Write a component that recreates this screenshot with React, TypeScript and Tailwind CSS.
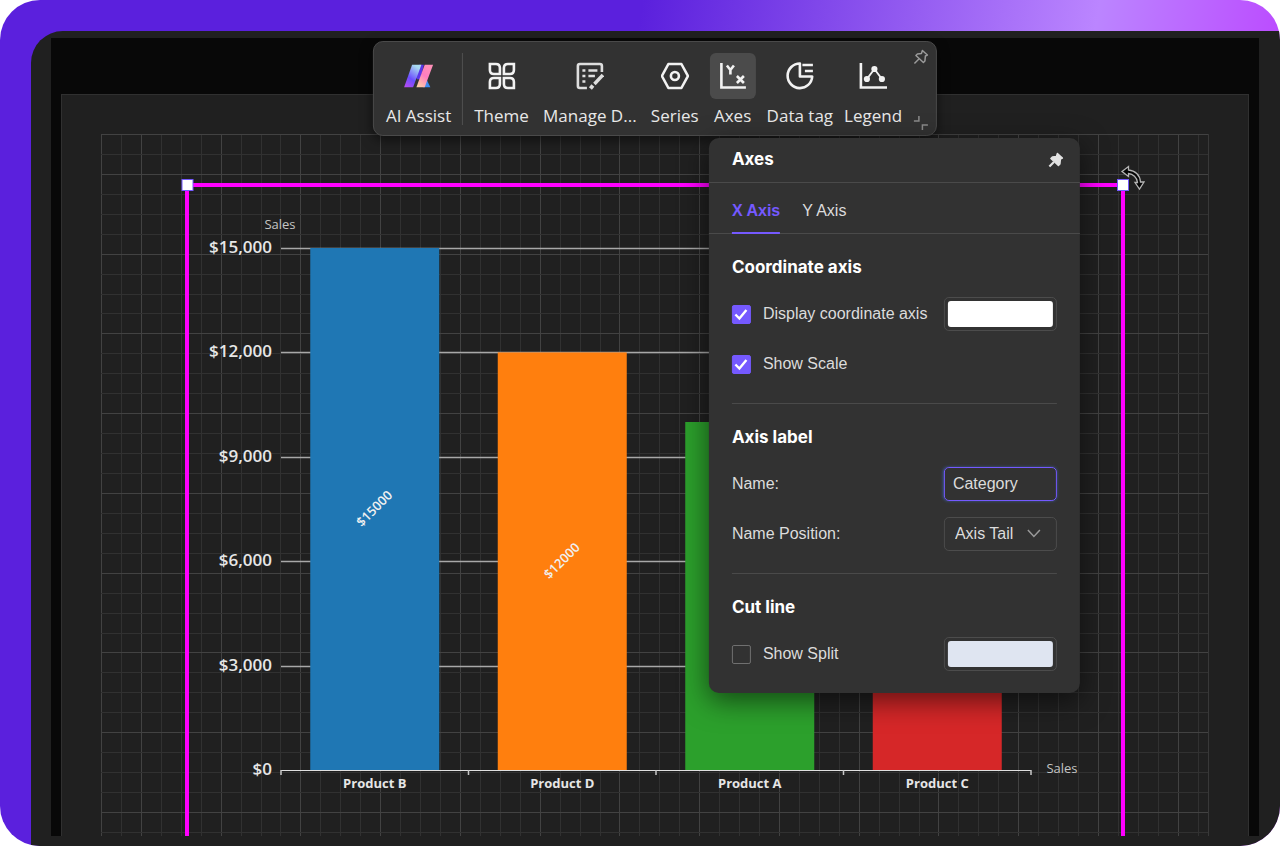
import { useState } from 'react';
import type { ReactNode } from 'react';

const PLOT = { left: 180, right: 930, base: 636, height: 522, max: 15000 };
const SLOT = (PLOT.right - PLOT.left) / 4;
const BAR_W = 129;
const GRID = 19.94;

const products = [
  { name: 'Product B', value: 15000, color: '#1f77b4' },
  { name: 'Product D', value: 12000, color: '#ff7f0e' },
  { name: 'Product A', value: 10000, color: '#2ca02c' },
  { name: 'Product C', value: 8000, color: '#d62728' },
];

const scale = [0, 3000, 6000, 9000, 12000, 15000];

const yOf = (value: number) => PLOT.base - (value / PLOT.max) * PLOT.height;

function GridLines() {
  const cols = Array.from({ length: 56 }, (_, i) => i);
  const rows = Array.from({ length: 36 }, (_, i) => i);

  return (
    <g strokeWidth={1}>
      {cols.map(i => (
        <line
          key={`c${i}`}
          x1={Math.round(i * GRID) + 0.5}
          x2={Math.round(i * GRID) + 0.5}
          y1={0}
          y2={702}
          stroke={i % 4 === 2 || i === 0 ? '#424242' : '#313131'}
        />
      ))}
      {rows.map(i => (
        <line
          key={`r${i}`}
          x1={0}
          x2={1108}
          y1={Math.round(i * GRID) + 0.5}
          y2={Math.round(i * GRID) + 0.5}
          stroke={i % 4 === 2 || i === 0 ? '#424242' : '#313131'}
        />
      ))}
      <line x1={1107.5} x2={1107.5} y1={0} y2={702} stroke="#383838" />
    </g>
  );
}

function Chart() {
  return (
    <svg
      viewBox="0 0 1108 702"
      className="block w-full h-auto font-['Open_Sans','Noto_Sans',sans-serif]"
      role="img"
      aria-label="Sales by product"
    >
      <GridLines />

      {/* Value axis */}
      {scale.map(v => (
        <g key={v}>
          <line
            x1={PLOT.left}
            x2={PLOT.right}
            y1={Math.round(yOf(v)) + 0.5}
            y2={Math.round(yOf(v)) + 0.5}
            stroke={v === 0 ? '#e0e0e0' : '#a8a8a8'}
            strokeWidth={v === 0 ? 1 : 1.5}
          />
          <text x={171} y={yOf(v) + 5} textAnchor="end" className="fill-[#e6e6e6] text-[17px] font-semibold">
            ${v.toLocaleString('en-US')}
          </text>
        </g>
      ))}
      <text x={179} y={95} textAnchor="middle" className="fill-[#c4c4c4] text-[13px]">Sales</text>
      <text x={961} y={639} textAnchor="middle" className="fill-[#c4c4c4] text-[13px]">Sales</text>

      {/* Bars */}
      {products.map((p, i) => {
        const center = PLOT.left + SLOT * (i + 0.5);
        const top = yOf(p.value);
        const middle = (top + PLOT.base) / 2;
        return (
          <g key={p.name}>
            <rect x={center - BAR_W / 2} y={top} width={BAR_W} height={PLOT.base - top} fill={p.color} />
            <text
              x={center}
              y={middle + 4}
              textAnchor="middle"
              transform={`rotate(-45 ${center} ${middle})`}
              className="fill-[#f0f0f0] text-[13px] font-semibold"
            >
              ${p.value}
            </text>
            <text x={center} y={654} textAnchor="middle" className="fill-[#e6e6e6] text-[13px] font-bold">
              {p.name}
            </text>
          </g>
        );
      })}
      {[0, 1, 2, 3, 4].map(i => (
        <line
          key={i}
          x1={PLOT.left + SLOT * i}
          x2={PLOT.left + SLOT * i}
          y1={636}
          y2={641}
          stroke="#c8c8c8"
          strokeWidth={1.5}
        />
      ))}

      {/* Selection frame */}
      <path d="M86 702V51H1022V702" fill="none" stroke="#ff00ff" strokeWidth={4} />
      <rect x={81} y={45.5} width={11} height={11} fill="#fff" stroke="#7559ff" />
      <rect x={1016.5} y={45.5} width={11} height={11} fill="#fff" stroke="#7559ff" />
      <path
        d="M1021 37.5L1027.500 32.500V36C1034 36.500 1039 41 1039.500 48H1043L1038.500 55L1034 48.500H1036.500C1036 43.500 1032 40 1027.500 39.500V42.500Z"
        fill="#050505"
        stroke="#b4b4b4"
        strokeWidth={1.300}
      />
    </svg>
  );
}

function Icon({ children }: { children: ReactNode }) {
  return (
    <svg viewBox="0 0 28 28" className="w-7 h-7" fill="none" stroke="#f2f2f2" strokeWidth={2.600} aria-hidden="true">
      {children}
    </svg>
  );
}

function AssistIcon() {
  return (
    <svg viewBox="0 0 28 28" className="w-7 h-7 overflow-visible" aria-hidden="true">
      <defs>
        <linearGradient id="assistLeft" x1="0" y1="1" x2="0.6" y2="0">
          <stop offset="0" stopColor="#c04cf0" />
          <stop offset="0.45" stopColor="#6b4dff" />
          <stop offset="1" stopColor="#a9dcf0" />
        </linearGradient>
        <linearGradient id="assistRight" x1="0" y1="1" x2="0.6" y2="0">
          <stop offset="0" stopColor="#ffd9a0" />
          <stop offset="0.6" stopColor="#ff7cc0" />
          <stop offset="1" stopColor="#ff8fb8" />
        </linearGradient>
      </defs>
      <path d="M21 16L25.500 25.300H18Z" fill="#3f8cf0" />
      <path d="M14 2.700H19L15.500 17L12.500 17.500L9.500 13Z" fill="#5a35e8" />
      <path d="M7.200 2.700H16.500L8.200 25.300H-0.800Z" fill="url(#assistLeft)" />
      <path d="M19.800 2.700H28.200L19.800 25.300H11.500Z" fill="url(#assistRight)" />
    </svg>
  );
}

const tools: { label: string; width?: string; icon: ReactNode }[] = [
  {
    label: 'Theme',
    icon: (
      <Icon>
        <path d="M2 2H8Q12 2 12 6V12H6Q2 12 2 8Z" />
        <path d="M26 2H20Q16 2 16 6V12H22Q26 12 26 8Z" />
        <path d="M2 26H8Q12 26 12 22V16H6Q2 16 2 20Z" />
        <path d="M26 26H20Q16 26 16 22V16H22Q26 16 26 20Z" />
      </Icon>
    ),
  },
  {
    label: 'Manage D...',
    width: 'w-[100px]',
    icon: (
      <Icon>
        <g stroke="#dedede">
          <path d="M26 10V4Q26 2 24 2H4Q2 2 2 4V24Q2 26 4 26H11" />
          <path d="M6.500 8.500H9.500M6.500 14H9.500M6.500 19.500H9.500M12.500 8.500H21.500M12.500 14H19" />
          <path d="M27 13L18.500 22" strokeWidth={3.400} />
          <path d="M17 23.500L14.500 26.500" strokeWidth={3.800} />
        </g>
      </Icon>
    ),
  },
  {
    label: 'Series',
    icon: (
      <Icon>
        <path d="M7.500 2H20.500L27 14L20.500 26H7.500L1 14Z" strokeLinejoin="round" />
        <circle cx={14} cy={14} r={4} />
      </Icon>
    ),
  },
  {
    label: 'Axes',
    icon: (
      <Icon>
        <path d="M2.500 1V25.500H27" />
        <path d="M8 3.500L11.500 8L15 3.500M11.500 8V12.500" />
        <path d="M18 14L25 21M25 14L18 21" />
      </Icon>
    ),
  },
  {
    label: 'Data tag',
    icon: (
      <Icon>
        <path d="M14 1.500A12.300 12.300 0 1 0 26.300 14.500H14Z" strokeLinejoin="round" />
        <path d="M16.500 3H27M19 9H27" />
      </Icon>
    ),
  },
  {
    label: 'Legend',
    icon: (
      <Icon>
        <path d="M2 1V25.500H28.500" />
        <path d="M8 17L15.500 7L23 17" strokeWidth={1.900} />
        <g fill="#f2f2f2" stroke="none">
          <circle cx={8} cy={17} r={3.100} />
          <circle cx={15.500} cy={7} r={3.100} />
          <circle cx={23} cy={17} r={3.100} />
        </g>
      </Icon>
    ),
  },
];

function Pin({ filled }: { filled?: boolean }) {
  return (
    <svg
      viewBox="0 0 16 16"
      className="w-4 h-4"
      fill={filled ? '#e2e2e2' : 'none'}
      stroke={filled ? '#e2e2e2' : '#9a9a9a'}
      strokeWidth={1.500}
      strokeLinejoin="round"
      aria-hidden="true"
    >
      <path d="M9.500 1.500L14.500 6L12.500 7L12 12L10.500 13.500L3 6.500L4.500 5L8.500 4.500Z" />
      <path d="M6 10L1.500 14.500" strokeWidth={filled ? 2.200 : 1.500} />
    </svg>
  );
}

function Toolbar() {
  const [active, setActive] = useState('Axes');

  return (
    <div className="flex items-start gap-[11px] whitespace-nowrap rounded-[10px] border border-[#4a4a4a] bg-[#323232] pt-[11px] pb-[7px] pl-3 pr-[34px] text-[17px] text-[#e8e8e8] font-['Open_Sans','Noto_Sans',sans-serif] shadow-[0_4px_12px_rgba(0,0,0,0.5)]">
      <button className="flex flex-col items-center">
        <span className="flex h-[46px] w-[46px] items-center justify-center">
          <AssistIcon />
        </span>
        <span className="mt-[5px] leading-6">AI Assist</span>
      </button>
      <div className="h-[72px] w-px bg-[#505050]" />
      {tools.map(t => (
        <button
          key={t.label}
          onClick={() => setActive(t.label)}
          className={`flex flex-col items-center ${t.width ?? ''}`}
        >
          <span
            className={`flex h-[46px] w-[46px] items-center justify-center rounded-md ${
              active === t.label ? 'bg-[#4b4b4b]' : ''
            }`}
          >
            {t.icon}
          </span>
          <span className="mt-[5px] leading-6">{t.label}</span>
        </button>
      ))}
      <button aria-label="Pin toolbar" className="absolute right-2 top-2">
        <Pin />
      </button>
      <button aria-label="Collapse toolbar" className="absolute bottom-1.5 right-2">
        <svg viewBox="0 0 16 14" className="h-3.5 w-4" fill="none" stroke="#8a8a8a" strokeWidth={1.500} aria-hidden="true">
          <path d="M1 5H6V0" />
          <path d="M9.500 14V9H15" />
        </svg>
      </button>
    </div>
  );
}

function Section({ title, children }: { title: string; children: ReactNode }) {
  return (
    <section className="border-b border-[#4a4a4a] pt-[23px] pb-[22px] last:border-b-0">
      <h3 className="mb-5 font-['Inter',sans-serif] text-[17px] leading-5 font-bold text-white">{title}</h3>
      <div className="flex flex-col gap-4">{children}</div>
    </section>
  );
}

function Check({ label, initial }: { label: string; initial?: boolean }) {
  const [checked, setChecked] = useState(!!initial);

  return (
    <label className="flex items-center gap-3">
      <span className="relative flex">
        <input
          type="checkbox"
          checked={checked}
          onChange={e => setChecked(e.target.checked)}
          className="h-[19px] w-[19px] appearance-none rounded-xs border border-[#707070] checked:border-[#7559ff] checked:bg-[#7559ff]"
        />
        {checked && (
          <svg viewBox="0 0 19 19" className="pointer-events-none absolute inset-0" fill="none" stroke="#fff" strokeWidth={2.400} aria-hidden="true">
            <path d="M3.500 9.500L7.500 13.500L14.500 5" />
          </svg>
        )}
      </span>
      {label}
    </label>
  );
}

function Swatch({ label, value }: { label: string; value: string }) {
  return (
    <input
      type="color"
      aria-label={label}
      defaultValue={value}
      className="h-[34px] w-[113px] appearance-none rounded-[5px] border border-[#4c4c4c] bg-transparent p-[3px] [&::-webkit-color-swatch-wrapper]:p-0 [&::-webkit-color-swatch]:rounded-[3px] [&::-webkit-color-swatch]:border-0"
    />
  );
}

function AxesPanel() {
  const [tab, setTab] = useState('X Axis');

  return (
    <div className="w-[371px] rounded-[10px] bg-[#323232] text-base text-[#dcdcdc] font-['Liberation_Sans',Arial,sans-serif] shadow-[0_8px_28px_rgba(0,0,0,0.55)]">
      <div className="flex h-[45px] items-center justify-between border-b border-[#4a4a4a] pl-[23px] pr-4">
        <h2 className="font-['Inter',sans-serif] text-[17px] font-bold text-white">Axes</h2>
        <button aria-label="Unpin panel">
          <Pin filled />
        </button>
      </div>

      <div className="flex gap-[22px] border-b border-[#4a4a4a] px-[23px]">
        {['X Axis', 'Y Axis'].map(name => (
          <button
            key={name}
            onClick={() => setTab(name)}
            className={`-mb-px h-[51px] border-b-2 pt-1.5 ${
              tab === name ? 'border-[#7559ff] font-bold text-[#7559ff]' : 'border-transparent'
            }`}
          >
            {name}
          </button>
        ))}
      </div>

      <div className="px-[23px]">
        <Section title="Coordinate axis">
          <div className="flex h-[34px] items-center justify-between">
            <Check label="Display coordinate axis" initial />
            <Swatch label="Axis color" value="#ffffff" />
          </div>
          <div className="flex h-[34px] items-center">
            <Check label="Show Scale" initial />
          </div>
        </Section>

        <Section title="Axis label">
          <div className="flex h-[34px] items-center justify-between">
            <label htmlFor="axisName">Name:</label>
            <input
              id="axisName"
              type="text"
              defaultValue="Category"
              className="h-[34px] w-[113px] rounded-[5px] border border-[#7559ff] bg-transparent px-2 outline-none shadow-[0_0_3px_#3a5a9a]"
            />
          </div>
          <div className="flex h-[34px] items-center justify-between">
            <label htmlFor="namePosition">Name Position:</label>
            <span className="relative">
              <select
                id="namePosition"
                defaultValue="Axis Tail"
                className="block h-[34px] w-[113px] appearance-none rounded-[5px] border border-[#4c4c4c] bg-transparent pl-2.5"
              >
                <option>Axis Tail</option>
                <option>Axis Head</option>
              </select>
              <svg viewBox="0 0 14 9" className="pointer-events-none absolute right-4 top-3 h-[9px] w-3.5" fill="none" stroke="#9a9a9a" strokeWidth={1.500} aria-hidden="true">
                <path d="M1 1L7 7.500L13 1" />
              </svg>
            </span>
          </div>
        </Section>

        <Section title="Cut line">
          <div className="flex h-[34px] items-center justify-between">
            <Check label="Show Split" />
            <Swatch label="Split line color" value="#dfe5f1" />
          </div>
        </Section>
      </div>
    </div>
  );
}

export default function App() {
  return (
    <div className="min-h-screen bg-white">
      <div className="flex min-h-screen overflow-hidden rounded-[40px] bg-[linear-gradient(100deg,#5b20dd_0%,#5b20dd_45%,#bb85ff_77%,#bb4cff_90%)] pt-[31px] pl-[31px]">
        <main className="flex-1 rounded-tl-[32px] bg-[#202020] pt-[7px] pr-[21px] pb-[10px] pl-5">
          <div className="relative bg-[#080808] px-2.5 pt-14">
            <div className="border border-b-0 border-[#303030] bg-[#202020] px-[39px] pt-[39px]">
              <Chart />
            </div>

            <div className="absolute left-1/2 top-[3px] -translate-x-1/2">
              <Toolbar />
              <div className="absolute left-[336px] top-full mt-0.5">
                <AxesPanel />
              </div>
            </div>
          </div>
        </main>
      </div>
    </div>
  );
}
